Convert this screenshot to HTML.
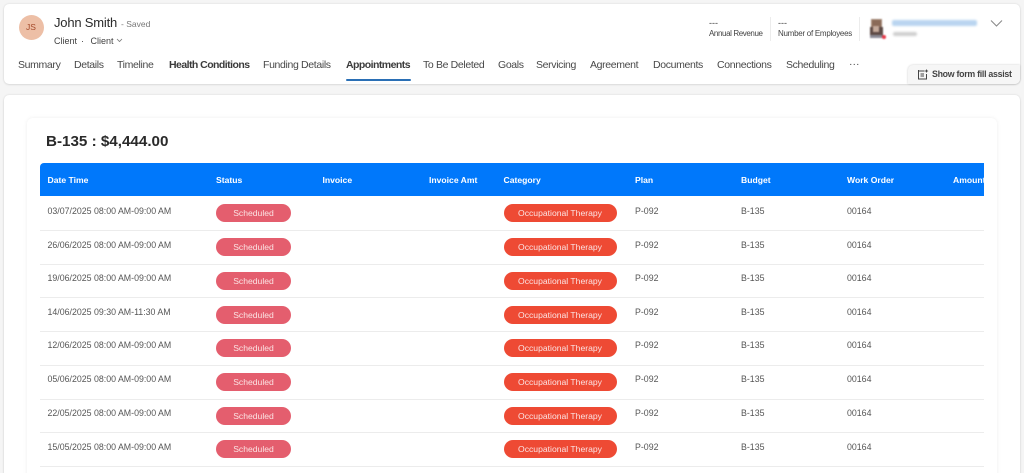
<!DOCTYPE html>
<html><head><meta charset="utf-8"><style>
html,body{margin:0;padding:0;width:1024px;height:473px;overflow:hidden;background:#f5f5f5}
body{font-family:"Liberation Sans",sans-serif;position:relative;color:#424242}
#w{position:absolute;left:0;top:0;width:1024px;height:473px;filter:blur(.3px);overflow:hidden}
#w div{position:absolute;white-space:nowrap}
.card{background:#fff;border-radius:5px;box-shadow:0 0 2px rgba(0,0,0,.12),0 1px 2px rgba(0,0,0,.08)}
.tab{top:58px;font-size:10.5px;line-height:14px;color:#484848;letter-spacing:-.35px}
.b{font-weight:bold;letter-spacing:-.55px;color:#3b3b3b}
.h{top:173.5px;font-size:8.6px;line-height:12px;color:#fff;font-weight:bold}
.t{font-size:8.8px;line-height:12px;color:#555}
.p{height:18px;line-height:18px;border-radius:9px;color:#fbe3e3;text-align:center;font-size:8.6px}
.s{left:216px;width:75px;background:#e45e6e}
.c{left:503.5px;width:113px;background:#ee4a34}
.l{left:40px;width:944px;height:1px;background:#ececec}
</style></head><body><div id="w">
<div class="card" style="left:4px;top:4px;width:1016px;height:80px"></div>
<div class="card" style="left:4px;top:95px;width:1016px;height:400px"></div>
<div style="left:27px;top:118px;width:970px;height:370px;background:#fff;border-radius:6px;box-shadow:0 0 4px rgba(0,0,0,.07)"></div>

<div style="left:18.5px;top:15px;width:25px;height:25px;border-radius:50%;background:#edbfa6;color:#a4492a;font-size:8.5px;line-height:25px;text-align:center">JS</div>
<div style="left:54px;top:15px;font-size:13px;line-height:16px;color:#2b2b2b;letter-spacing:-.2px">John Smith</div>
<div style="left:121px;top:18px;font-size:8.5px;line-height:12px;color:#777">- Saved</div>
<div style="left:54px;top:35px;font-size:9px;line-height:12px;color:#424242">Client</div>
<div style="left:81px;top:35px;font-size:9px;line-height:12px;color:#424242">·</div>
<div style="left:90.5px;top:34.5px;font-size:9px;line-height:12px;color:#424242">Client</div>
<svg style="position:absolute;left:116px;top:38px" width="7" height="5" viewBox="0 0 7 5"><path d="M1 1l2.5 2.500L6 1" fill="none" stroke="#777" stroke-width=".8"/></svg>

<div style="left:709px;top:17px;font-size:9px;line-height:12px;color:#424242">---</div>
<div style="left:709px;top:28px;font-size:8px;line-height:12px;color:#444;letter-spacing:-.4px">Annual Revenue</div>
<div style="left:770px;top:17px;width:1px;height:24px;background:#ececec"></div>
<div style="left:778px;top:17px;font-size:9px;line-height:12px;color:#424242">---</div>
<div style="left:778px;top:28px;font-size:8px;line-height:12px;color:#444;letter-spacing:-.27px">Number of Employees</div>
<div style="left:859px;top:17px;width:1px;height:24px;background:#ececec"></div>
<svg style="position:absolute;left:869px;top:18px;filter:blur(.8px)" width="20" height="22" viewBox="0 0 20 22">
<rect x="2" y="1" width="11" height="8" fill="#a58a78"/><rect x="3" y="2" width="9" height="7" fill="#8a6a58"/>
<rect x="1" y="9" width="13" height="11" fill="#5d4a45"/><rect x="4" y="8" width="6" height="6" fill="#c4a99a"/>
<rect x="1" y="17" width="12" height="3" fill="#8b8a96"/><circle cx="15" cy="19" r="2" fill="#e83a4a"/></svg>
<div style="left:892px;top:20px;width:85px;height:6px;background:#b9d5f0;border-radius:2px;filter:blur(1px)"></div>
<div style="left:893px;top:32px;width:24px;height:4px;background:#cfcfcf;border-radius:2px;filter:blur(1px)"></div>
<svg style="position:absolute;left:990px;top:19px" width="13" height="9" viewBox="0 0 13 9"><path d="M1 1.500l5.500 5.500L12 1.500" fill="none" stroke="#888" stroke-width="1"/></svg>

<div class="tab" style="left:18px">Summary</div>
<div class="tab" style="left:74px">Details</div>
<div class="tab" style="left:117px">Timeline</div>
<div class="tab b" style="left:169px">Health Conditions</div>
<div class="tab" style="left:263px">Funding Details</div>
<div class="tab b" style="left:346px">Appointments</div>
<div style="left:346px;top:78.500px;width:64.500px;height:2px;background:#2a6fb5;border-radius:1px"></div>
<div class="tab" style="left:423px">To Be Deleted</div>
<div class="tab" style="left:498px">Goals</div>
<div class="tab" style="left:536px">Servicing</div>
<div class="tab" style="left:590px">Agreement</div>
<div class="tab" style="left:653px">Documents</div>
<div class="tab" style="left:717px">Connections</div>
<div class="tab" style="left:786px">Scheduling</div>
<div class="tab" style="left:849px;top:57px;letter-spacing:0">···</div>

<div style="left:908px;top:65px;width:112px;height:19px;background:#f6f6f6;border-radius:5px 0 5px 0;box-shadow:0 0 2px rgba(0,0,0,.2)"></div>
<svg style="position:absolute;left:917px;top:68px" width="12" height="13" viewBox="0 0 12 13"><path d="M1.500 3h6M1.500 3v8h8V6M3.500 6h3.500M3.500 8h3.500M1.500 3V2" fill="none" stroke="#444" stroke-width="1"/><path d="M9.500 1l.6 1.400 1.400.6-1.400.6-.6 1.400-.6-1.400L7.500 3l1.400-.6z" fill="#444"/></svg>
<div style="left:932px;top:68px;font-size:8.8px;line-height:12px;font-weight:bold;color:#444;letter-spacing:-.28px">Show form fill assist</div>

<div style="left:46px;top:133px;font-size:15.200px;line-height:18px;font-weight:bold;color:#2a2a2a">B-135 : $4,444.00</div>

<div style="left:40px;top:163px;width:944px;height:33px;background:#0078fb;border-radius:4px 0 0 0;overflow:hidden"></div>
<div class="h" style="left:47.500px">Date Time</div>
<div class="h" style="left:216px">Status</div>
<div class="h" style="left:322.500px">Invoice</div>
<div class="h" style="left:429px">Invoice Amt</div>
<div class="h" style="left:503.500px">Category</div>
<div class="h" style="left:635px">Plan</div>
<div class="h" style="left:741px">Budget</div>
<div class="h" style="left:847px">Work Order</div>
<div style="left:953px;top:173.500px;width:31px;overflow:hidden;font-size:8.6px;line-height:12px;color:#fff;font-weight:bold">Amount</div>

<div class="t" style="left:47.500px;top:205px">03/07/2025 08:00 AM-09:00 AM</div><div class="p s" style="top:204px">Scheduled</div><div class="p c" style="top:204px">Occupational Therapy</div><div class="t" style="left:635px;top:205px">P-092</div><div class="t" style="left:741px;top:205px">B-135</div><div class="t" style="left:847px;top:205px">00164</div><div class="l" style="top:230px"></div>
<div class="t" style="left:47.500px;top:238.500px">26/06/2025 08:00 AM-09:00 AM</div><div class="p s" style="top:238px">Scheduled</div><div class="p c" style="top:238px">Occupational Therapy</div><div class="t" style="left:635px;top:238.500px">P-092</div><div class="t" style="left:741px;top:238.500px">B-135</div><div class="t" style="left:847px;top:238.500px">00164</div><div class="l" style="top:264px"></div>
<div class="t" style="left:47.500px;top:272px">19/06/2025 08:00 AM-09:00 AM</div><div class="p s" style="top:272px">Scheduled</div><div class="p c" style="top:272px">Occupational Therapy</div><div class="t" style="left:635px;top:272px">P-092</div><div class="t" style="left:741px;top:272px">B-135</div><div class="t" style="left:847px;top:272px">00164</div><div class="l" style="top:297px"></div>
<div class="t" style="left:47.500px;top:306px">14/06/2025 09:30 AM-11:30 AM</div><div class="p s" style="top:305.500px">Scheduled</div><div class="p c" style="top:305.500px">Occupational Therapy</div><div class="t" style="left:635px;top:306px">P-092</div><div class="t" style="left:741px;top:306px">B-135</div><div class="t" style="left:847px;top:306px">00164</div><div class="l" style="top:331px"></div>
<div class="t" style="left:47.500px;top:339px">12/06/2025 08:00 AM-09:00 AM</div><div class="p s" style="top:339px">Scheduled</div><div class="p c" style="top:339px">Occupational Therapy</div><div class="t" style="left:635px;top:339px">P-092</div><div class="t" style="left:741px;top:339px">B-135</div><div class="t" style="left:847px;top:339px">00164</div><div class="l" style="top:365px"></div>
<div class="t" style="left:47.500px;top:373px">05/06/2025 08:00 AM-09:00 AM</div><div class="p s" style="top:373px">Scheduled</div><div class="p c" style="top:373px">Occupational Therapy</div><div class="t" style="left:635px;top:373px">P-092</div><div class="t" style="left:741px;top:373px">B-135</div><div class="t" style="left:847px;top:373px">00164</div><div class="l" style="top:399px"></div>
<div class="t" style="left:47.500px;top:407px">22/05/2025 08:00 AM-09:00 AM</div><div class="p s" style="top:406.500px">Scheduled</div><div class="p c" style="top:406.500px">Occupational Therapy</div><div class="t" style="left:635px;top:407px">P-092</div><div class="t" style="left:741px;top:407px">B-135</div><div class="t" style="left:847px;top:407px">00164</div><div class="l" style="top:432px"></div>
<div class="t" style="left:47.500px;top:441px">15/05/2025 08:00 AM-09:00 AM</div><div class="p s" style="top:440px">Scheduled</div><div class="p c" style="top:440px">Occupational Therapy</div><div class="t" style="left:635px;top:441px">P-092</div><div class="t" style="left:741px;top:441px">B-135</div><div class="t" style="left:847px;top:441px">00164</div><div class="l" style="top:466px"></div>
</div></body></html>
